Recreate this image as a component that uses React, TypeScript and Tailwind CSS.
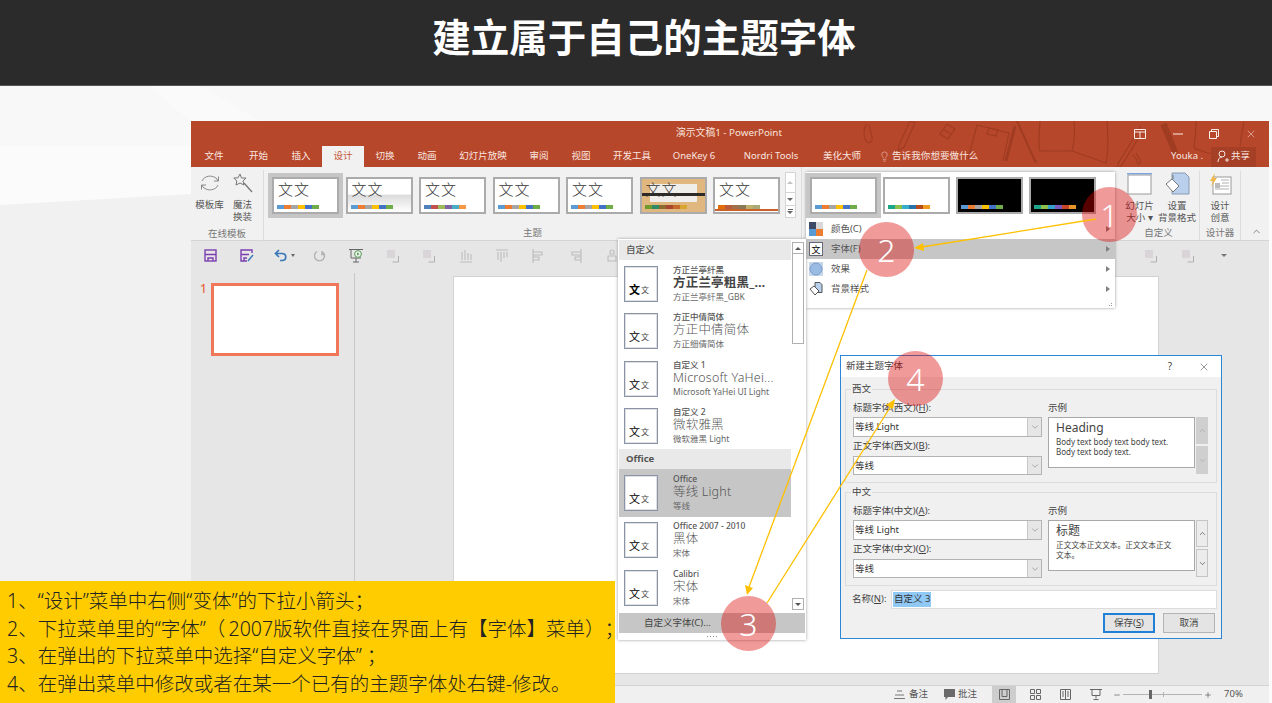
import { ChevronDown, ChevronUp, Lightbulb, Minus, Plus, X } from "lucide-react";

const OFFICE = ["#5b9bd5", "#ed7d31", "#a5a5a5", "#ffc000", "#4472c4", "#70ad47"];
const OFFICE_OLD = ["#4f81bd", "#c0504d", "#9bbb59", "#8064a2", "#4bacc6", "#f79646"];
const TEAL = ["#1ba58a", "#8cc04a", "#36aecb", "#2872a7", "#b84a1e", "#ef9b1d"];
const TEAL_DARK = ["#1ba58a", "#8cc04a", "#36a0cb", "#7a5bbd", "#c8452a", "#e6952a"];
const WOOD = ["#6f9a2e", "#2f8a6a", "#8a6a2e", "#a8452e", "#c46a2a", "#d8a52e"];
const WARM = ["#e36c09", "#b85b3a", "#a0704a", "#8a7a5a", "#c0b070", "#a8a878"];

const TABS = [
  { label: "文件", w: "w-[46px]" },
  { label: "开始", w: "w-[43px]" },
  { label: "插入", w: "w-[42px]" },
  { label: "设计", w: "w-[42px]", active: true },
  { label: "切换", w: "w-[42px]" },
  { label: "动画", w: "w-[42px]" },
  { label: "幻灯片放映", w: "w-[70px]" },
  { label: "审阅", w: "w-[42px]" },
  { label: "视图", w: "w-[42px]" },
  { label: "开发工具", w: "w-[60px]" },
  { label: "OneKey 6", w: "w-[64px]" },
  { label: "Nordri Tools", w: "w-[90px]" },
  { label: "美化大师", w: "w-[52px]" },
];

const FONTS = [
  { head: "方正兰亭纤黑", mid: "方正兰亭粗黑_…", sub: "方正兰亭纤黑_GBK", bold: true },
  { head: "方正中倩简体", mid: "方正中倩简体", sub: "方正细倩简体" },
  { head: "自定义 1", mid: "Microsoft YaHei...", sub: "Microsoft YaHei UI Light" },
  { head: "自定义 2", mid: "微软雅黑", sub: "微软雅黑 Light" },
];

const OFFICE_FONTS = [
  { head: "Office", mid: "等线 Light", sub: "等线", selected: true },
  { head: "Office 2007 - 2010", mid: "黑体", sub: "宋体" },
  { head: "Calibri", mid: "宋体", sub: "宋体" },
];

function Swatches({ colors }: { colors: string[] }) {
  return (
    <div className="flex">
      {colors.map((c, i) => (
        <div key={i} className="w-[7px] h-[4px]" style={{ backgroundColor: c }} />
      ))}
    </div>
  );
}

function ThemeThumb({ colors, bg = "bg-white", text = true, selected = false, dark = false, inner }: {
  colors: string[];
  bg?: string;
  text?: boolean;
  selected?: boolean;
  dark?: boolean;
  inner?: React.ReactNode;
}) {
  return (
    <div
      className={`relative w-[67px] h-[37px] shrink-0 border-2 border-[#ababab] flex flex-col justify-end pb-[3px] pl-[3px] ${bg} ${
        selected ? "outline-[4px] outline-[#c6c6c6] border-[#8c8c8c]" : ""
      } ${dark ? "border-[#9a9a9a]" : ""}`}
    >
      {inner}
      {text && (
        <div className="absolute left-[4px] top-[0px] text-[15px] leading-[20px] text-[#333] font-light tracking-[1px]">文文</div>
      )}
      <div className="relative">
        <Swatches colors={colors} />
      </div>
    </div>
  );
}

function RibbonBtn({ icon, lines, w = "w-[33px]" }: { icon: React.ReactNode; lines: React.ReactNode[]; w?: string }) {
  return (
    <div className={`${w} flex flex-col items-center text-[9.5px] leading-[12px] text-[#555]`}>
      <div className="h-[26px] flex items-center justify-center">{icon}</div>
      <div className="mt-[3px] whitespace-nowrap text-center">
        {lines.map((l, i) => (
          <div key={i}>{l}</div>
        ))}
      </div>
    </div>
  );
}

function GroupLabel({ children }: { children: React.ReactNode }) {
  return <div className="h-[15px] text-center text-[9.5px] leading-[15px] text-[#777]">{children}</div>;
}

function ToolIcon({ children }: { children: React.ReactNode }) {
  return <div className="w-[36.5px] shrink-0 flex items-center justify-center">{children}</div>;
}

function FaintStack() {
  return (
    <svg width="14" height="14" viewBox="0 0 14 14">
      <rect x="1" y="1" width="8" height="8" fill="#d8d4d8" />
      <path d="M12.500 7v6h-6" fill="none" stroke="#b0b0b0" />
    </svg>
  );
}

function FaintBars({ d }: { d: string }) {
  return (
    <svg width="14" height="14" viewBox="0 0 14 14">
      <path d={d} fill="none" stroke="#bcbcbc" strokeWidth="1.100" />
    </svg>
  );
}

function FontThumb({ bold }: { bold?: boolean }) {
  return (
    <div className="w-[34px] h-[36px] shrink-0 border border-[#8a94a8] bg-white shadow-[inset_0_0_0_1px_#e0e0e0] flex items-end pl-[4px] pb-[5px] text-black">
      <span className={`text-[11px] leading-[13px] ${bold ? "font-bold" : "font-normal"}`}>文</span>
      <span className="text-[8px] leading-[12px] ml-[1px] text-[#444]">文</span>
    </div>
  );
}

function FontItem({ head, mid, sub, bold, selected }: { head: string; mid: string; sub: string; bold?: boolean; selected?: boolean }) {
  return (
    <div className={`h-[47.5px] flex items-center pl-[5px] ${selected ? "bg-[#c6c6c6]" : ""}`}>
      <FontThumb bold={bold} />
      <div className="ml-[15px] min-w-0 whitespace-nowrap text-[#555]">
        <div className="text-[8.5px] leading-[10px] font-medium">{head}</div>
        <div className={`text-[12.5px] leading-[15px] ${bold ? "font-bold text-[#444]" : "font-light text-[#555]"} tracking-[0.2px]`}>{mid}</div>
        <div className="text-[8.5px] leading-[13px] text-[#666]">{sub}</div>
      </div>
    </div>
  );
}

function MenuRow({ icon, label, active }: { icon: React.ReactNode; label: string; active?: boolean }) {
  return (
    <div className={`h-[20px] flex items-center pl-[3px] pr-[5px] ${active ? "bg-[#c6c6c6]" : ""}`}>
      <div className="w-[14px] h-[14px] flex items-center justify-center">{icon}</div>
      <span className="ml-[8px] text-[9.5px] text-[#555]">{label}</span>
      <div className="ml-auto w-0 h-0 border-y-[3px] border-y-transparent border-l-[4px] border-l-[#808080]" />
    </div>
  );
}

function Combo({ value, h = "h-[20px]" }: { value: string; h?: string }) {
  return (
    <div className={`${h} w-[189px] flex items-center bg-white border border-[#b4b4b4]`}>
      <span className="flex-1 pl-[1px] text-[9.5px] text-[#333]">{value}</span>
      <div className="w-[14px] h-full bg-[#e6e6e6] border-l border-[#c8c8c8] flex items-center justify-center">
        <ChevronDown size={10} strokeWidth={1.2} className="text-[#666]" />
      </div>
    </div>
  );
}

function FontGroup({ title, h1, h2, v1, preview, disabled }: { title: string; h1: React.ReactNode; h2: React.ReactNode; v1: string; preview: React.ReactNode; disabled?: boolean }) {
  return (
    <fieldset className="border border-[#dcdcdc] px-[7px] pb-[7px] pt-[7px] min-w-0">
      <legend className="-ml-[2px] px-[1px] text-[9.5px] leading-[12px] text-[#444]">{title}</legend>
      <div className="flex">
        <div className="w-[189px] text-[9.5px] leading-[12px] text-[#444]">
          <div>{h1}</div>
          <div className="mt-[3px]">
            <Combo value={v1} />
          </div>
          <div className="mt-[3px]">{h2}</div>
          <div className="mt-[4px]">
            <Combo value="等线" h="h-[19px]" />
          </div>
        </div>
        <div className="ml-[6px] flex-1 text-[9.5px] leading-[12px] text-[#444]">
          <div>示例</div>
          <div className="mt-[3px] flex">
            <div className="w-[147px] h-[51px] bg-white border border-[#a8a8a8] pl-[7px] pt-[2px] overflow-hidden">
              {preview}
            </div>
            <div className="ml-[1px] w-[12px] h-[57px] flex flex-col gap-[2px]">
              <div className={`h-[27px] flex items-center justify-center ${disabled ? "bg-[#cfcfcf]" : "bg-[#ececec] border border-[#c4c4c4]"}`}>
                <ChevronUp size={9} strokeWidth={1.6} className={disabled ? "text-[#a0a0a0]" : "text-[#333]"} />
              </div>
              <div className={`h-[28px] flex items-center justify-center ${disabled ? "bg-[#cfcfcf]" : "bg-[#ececec] border border-[#c4c4c4]"}`}>
                <ChevronDown size={9} strokeWidth={1.6} className={disabled ? "text-[#a0a0a0]" : "text-[#333]"} />
              </div>
            </div>
          </div>
        </div>
      </div>
    </fieldset>
  );
}

function Badge({ n, pos }: { n: number; pos: string }) {
  return (
    <div className={`absolute ${pos} w-[55px] h-[55px] rounded-full bg-[#d90202]/40 flex items-center justify-center text-white text-[32px] font-light leading-none`}>
      {n}
    </div>
  );
}

function TitleArt() {
  return (
    <svg className="absolute right-0 top-0" width="480" height="46" viewBox="790 121 480 46" fill="none" stroke="#a03c22" strokeWidth="1.2">
      <path d="M868 124c-4 4-4 14 0 18 3 2 6-1 5-5l-3-12" />
      <path d="M900 145l11-24 5 2-11 24-6 4z" />
      <path d="M948 124l8 5-7 10-8-5z M944 129l8 5" />
      <path d="M978 125l-9 34M978 125l32 8-6 28" />
      <path d="M990 128l9 2-2 6-9-2z" />
      <path d="M1016 126l-9 35" strokeWidth="3" />
      <path d="M1018 121l18 40 2 1" strokeWidth="2" />
      <path d="M1041 121c-1 13-2 26 0 30l32 0M1073 151c3-10 3-20 2-30M1108 121c1 14 1 34-1 42l-34-12" />
      <path d="M1142 126l-22 36-3 8 6-5 22-36" />
      <path d="M1133 155c3 1 5 5 6 9 2 1 3-2 2-4l-4-7" />
      <path d="M1162 125l12 28 4 2 0-4-11-28" fill="#a03c22" />
      <path d="M1197 121c0 12-1 20-2 26 1 3 6 3 14 6l28 4" />
      <path d="M1245 122c-2 8-3 16-4 24" />
    </svg>
  );
}

export default function App() {
  return (
    <div className="relative w-[1272px] h-[703px] overflow-hidden bg-[#fbfbfb] [text-spacing-trim:space-all] font-['Noto_Sans','Noto_Sans_CJK_SC',sans-serif] flex flex-col">
      {/* faint backdrop shapes */}
      <svg className="absolute left-0 top-[86px]" width="1272" height="617" viewBox="0 0 1272 617">
        <rect width="1272" height="60" fill="#f8f8f8" />
        <polygon points="0,119 191,108 191,617 0,617" fill="#f1f1f1" />
        <polygon points="150,0 190,35 260,35 200,0" fill="#fafafa" />
      </svg>

      <header className="relative h-[86px] shrink-0 bg-[#2b2b2b] border-b border-[#555] flex items-center justify-center">
        <h1 className="text-[38.5px] leading-none font-bold text-white -mt-[11px] ml-[16px]">建立属于自己的主题字体</h1>
      </header>

      {/* PowerPoint window */}
      <div className="relative ml-[191px] mt-[35px] w-[1078px] flex-1 min-h-0 flex flex-col bg-[#e6e6e6]">
        <div className="relative bg-[#b7472a] h-[46px] shrink-0">
          <TitleArt />
          <div className="relative h-[25px] flex items-center pl-[485px] text-[9.8px] text-[#f7e4dd]">
            <span>演示文稿1 - PowerPoint</span>
            <div className="ml-auto flex items-center">
              <svg className="mr-[27px]" width="12" height="10" viewBox="0 0 12 10" fill="none" stroke="#fbeee9">
                <path d="M.500.500h11v9H.500zM.500 3h11M6 3v6.500" />
              </svg>
              <svg className="mr-[26px]" width="10" height="2" viewBox="0 0 10 2" stroke="#fbeee9">
                <path d="M0 1h10" />
              </svg>
              <svg className="mr-[26px]" width="10" height="10" viewBox="0 0 10 10" fill="none" stroke="#fbeee9">
                <path d="M.500 2.500h7v7h-7zM2.500 2.500v-2h7v7h-2" />
              </svg>
              <X size={12} strokeWidth={1} className="mr-[12px] text-[#fbeee9]" />
            </div>
          </div>
          <div className="relative h-[21px] flex text-[9.5px] text-[#f9e6e0]">
            {TABS.map((t) => (
              <div
                key={t.label}
                className={`${t.w} shrink-0 flex items-center justify-center ${t.active ? "bg-[#f1f1f1] text-[#c8583a]" : ""}`}
              >
                {t.label}
              </div>
            ))}
            <div className="ml-[11px] flex items-center">
              <Lightbulb size={11} strokeWidth={1.1} />
              <span className="ml-[2px] tracking-[0.1px]">告诉我你想要做什么</span>
            </div>
            <div className="ml-auto flex items-center">
              <span>Youka .</span>
              <div className="ml-[8px] mr-[13px] w-[45px] h-[20px] bg-[#a53f25] flex items-center justify-center">
                <svg width="12" height="13" viewBox="0 0 12 13" fill="none" stroke="currentColor">
                  <circle cx="5" cy="4" r="3" />
                  <path d="M1 12c0-3 1.500-5 4-5M8 10h4M10 8v4" />
                </svg>
                <span className="ml-[2px]">共享</span>
              </div>
            </div>
          </div>
        </div>

        {/* ribbon */}
        <div className="h-[74px] shrink-0 bg-[#f1f1f1] border-b border-[#d4d4d4] flex">
          <div className="w-[73px] flex flex-col border-r border-[#dcdcdc] my-[3px] -mb-[1px]">
            <div className="flex-1 pl-[2px] flex">
              <RibbonBtn
                lines={["模板库"]}
                icon={
                  <svg width="22" height="22" viewBox="0 0 22 22" fill="none" stroke="#8a8a8a" strokeWidth="1">
                    <path d="M3 9c2-5 10-7 15-2l1 2M19 13c-2 5-10 7-15 2l-1-2" />
                    <path d="M19.500 4.500v4.500h-4.500M2.500 17.500v-4.500h4.500" />
                  </svg>
                }
              />
              <RibbonBtn
                lines={["魔法", "换装"]}
                icon={
                  <svg width="22" height="22" viewBox="0 0 22 22" fill="none" stroke="#777" strokeWidth="1">
                    <path d="M8 2l1.500 4 4.500 0-3 3 1 4-4-2-4 2 .8-4-3-3 4.200-.2z" />
                    <path d="M12 11l8 9" strokeWidth="1.300" />
                  </svg>
                }
              />
            </div>
            <GroupLabel>在线模板</GroupLabel>
          </div>

          <div className="w-[537px] flex flex-col">
            <div className="flex-1 pl-[8px] pt-[10px] flex gap-[6.5px] relative">
              <ThemeThumb colors={OFFICE} selected />
              <ThemeThumb colors={OFFICE} bg="bg-[linear-gradient(#fff_45%,#dcdcdc_50%,#fff_100%)]" />
              <ThemeThumb colors={OFFICE_OLD} />
              <ThemeThumb colors={OFFICE} />
              <ThemeThumb colors={OFFICE} />
              <ThemeThumb
                colors={WOOD}
                bg="bg-[#dfb77f]"
                inner={
                  <>
                    <div className="absolute left-[8px] right-[8px] top-[5px] h-[18px] bg-[#f0eeea]" />
                    <div className="absolute left-0 right-0 top-[14px] h-[3px] bg-[#2e2a26]" />
                  </>
                }
              />
              <ThemeThumb
                colors={WARM}
                inner={<div className="absolute left-0 right-0 bottom-[1px] h-[2px] bg-[#c8622a]" />}
              />
              <div className="ml-[-2px] mt-[-5px] w-[11px] h-[46px] flex flex-col border border-[#d4d4d4] bg-white text-[#666]">
                <div className="h-[20px] flex items-center justify-center border-b border-[#d4d4d4]">
                  <div className="w-0 h-0 border-x-[3px] border-x-transparent border-b-[3px] border-b-[#c4c4c4]" />
                </div>
                <div className="h-[13px] flex items-center justify-center border-b border-[#d4d4d4]">
                  <div className="w-0 h-0 border-x-[3px] border-x-transparent border-t-[3px] border-t-[#666]" />
                </div>
                <div className="flex-1 flex flex-col items-center justify-center gap-[1px]">
                  <div className="w-[5px] h-px bg-[#666]" />
                  <div className="w-0 h-0 border-x-[3px] border-x-transparent border-t-[3px] border-t-[#666]" />
                </div>
              </div>
            </div>
            <GroupLabel>主题</GroupLabel>
          </div>

          <div className="w-[317px] border-l border-[#dcdcdc]" />

          <div className="w-[82px] flex flex-col border-r border-[#dcdcdc] mt-[4px]">
            <div className="flex-1 flex pl-[3px]">
              <RibbonBtn
                w="w-[37px]"
                lines={["幻灯片", "大小 ▾"]}
                icon={
                  <svg width="26" height="22" viewBox="0 0 26 22" fill="none">
                    <rect x="1" y="2" width="23" height="19" fill="#fff" stroke="#9a9a9a" />
                    <path d="M0 .700h25" stroke="#7ea6d8" strokeWidth="1.400" />
                  </svg>
                }
              />
              <RibbonBtn
                w="w-[38px]"
                lines={["设置", "背景格式"]}
                icon={
                  <svg width="26" height="24" viewBox="0 0 26 24" fill="none">
                    <path d="M8 1h13l4 4v17H8z" fill="#b8d0ec" stroke="#8a9ab0" />
                    <path d="M2 12l6-5 7 7-6 6z" fill="#fff" stroke="#777" />
                    <path d="M9 7V3" stroke="#777" />
                  </svg>
                }
              />
            </div>
            <GroupLabel>自定义</GroupLabel>
          </div>

          <div className="w-[41px] flex flex-col border-r border-[#dcdcdc] mt-[4px]">
            <div className="flex-1 flex justify-center">
              <RibbonBtn
                w="w-[40px]"
                lines={["设计", "创意"]}
                icon={
                  <svg width="24" height="24" viewBox="0 0 24 24" fill="none">
                    <rect x="5" y="5" width="18" height="17" fill="#fff" stroke="#9a9a9a" />
                    <path d="M13 8h8M14 11h7M7 14h14M7 17h14" stroke="#b0b0b0" />
                    <rect x="7" y="11" width="5" height="5" fill="#bbb" />
                    <path d="M7 1L2 9h3l-2 6 6-9H6z" fill="#f0b94a" />
                  </svg>
                }
              />
            </div>
            <GroupLabel>设计器</GroupLabel>
          </div>

          <div className="flex-1 flex items-end justify-end pr-[7px] pb-[3px]">
            <ChevronUp size={11} strokeWidth={1.5} className="text-[#555]" />
          </div>
        </div>

        {/* quick toolbar */}
        <div className="h-[32px] shrink-0 flex items-center pl-[1px] pb-[3px]">
          <ToolIcon>
            <svg width="13" height="13" viewBox="0 0 13 13" fill="none" stroke="#7b3fb0" strokeWidth="1.400">
              <rect x="1" y="1" width="11" height="11" />
              <path d="M1 5.500h11M4 12V9h5v3" />
            </svg>
          </ToolIcon>
          <ToolIcon>
            <svg width="14" height="13" viewBox="0 0 14 13" fill="none" stroke="#7b3fb0" strokeWidth="1.400">
              <path d="M12 4V1H1v11h6M1 5.500h8M4 12V9h3" />
              <path d="M8 12l5-6" stroke="#3a7ab5" />
            </svg>
          </ToolIcon>
          <ToolIcon>
            <div className="flex items-center gap-[3px] ml-[2px]">
              <svg width="14" height="13" viewBox="0 0 14 13" fill="none" stroke="#3a78b8" strokeWidth="1.700">
                <path d="M5 1L1.500 4.500 5 8M2 4.500h6c5 0 5 7 0 7H6" />
              </svg>
              <div className="w-0 h-0 border-x-[2.5px] border-x-transparent border-t-[3px] border-t-[#666]" />
            </div>
          </ToolIcon>
          <ToolIcon>
            <svg width="12" height="12" viewBox="0 0 12 12" fill="none" stroke="#b0b0b0" strokeWidth="1.400">
              <path d="M8 1.500a5 5 0 1 1-5 0M8 1v3.500h3" />
            </svg>
          </ToolIcon>
          <ToolIcon>
            <svg width="16" height="15" viewBox="0 0 16 15" fill="none" stroke="#666">
              <path d="M1 1.500h14M3 1.500v8.500h10" />
              <path d="M5 14h6M8 10v4" />
              <circle cx="10" cy="6" r="3.400" fill="#e8f3e8" stroke="#5a9a5a" />
              <path d="M9.200 4.500l2.200 1.500-2.200 1.500z" fill="#4a8a4a" stroke="none" />
            </svg>
          </ToolIcon>
          <ToolIcon><FaintStack /></ToolIcon>
          <ToolIcon><FaintStack /></ToolIcon>
          <ToolIcon><FaintBars d="M1 13h12M3 3v8M6 1v10M9 4v7M12 5v6" /></ToolIcon>
          <ToolIcon><FaintBars d="M1 1h12M3 3v8M6 3v10M9 3v6M12 3v5" /></ToolIcon>
          <ToolIcon><FaintBars d="M1 0v14M1 3h9v3H1M1 8h6v3H1" /></ToolIcon>
          <ToolIcon><FaintBars d="M13 0v14M13 3H4v3h9M13 8H7v3h6" /></ToolIcon>
          <ToolIcon><FaintBars d="M7 1a2 2 0 0 1 2 2v2H5V3a2 2 0 0 1 2-2zM3 7h8v5H3z" /></ToolIcon>
          <div className="ml-auto flex items-center">
            <ToolIcon><FaintStack /></ToolIcon>
            <ToolIcon><FaintStack /></ToolIcon>
            <div className="w-[36px] flex justify-center">
              <div className="w-0 h-0 border-x-[3px] border-x-transparent border-t-[3px] border-t-[#777]" />
            </div>
            <div className="w-[27px]" />
          </div>
        </div>

        {/* slide panes */}
        <div className="flex-1 min-h-0 flex">
          <div className="w-[164px] shrink-0 border-r border-[#c8c8c8] flex pl-[9px] pt-[10px]">
            <span className="w-[11px] text-[12px] leading-[12px] font-medium text-[#e8683f]">1</span>
            <div className="w-[128px] h-[73px] bg-white border-[3px] border-[#f0775a]" />
          </div>
          <div className="flex-1 min-w-0 pl-[98px] pt-[3px]">
            <div className="w-[706px] h-[398px] bg-white border border-[#d2d2d2]" />
          </div>
        </div>

        {/* status bar */}
        <div className="h-[18px] shrink-0 border-t border-[#d4d4d4] bg-[#f0f0f0] flex items-center text-[9.5px] text-[#555]">
          <svg className="ml-[703px]" width="11" height="10" viewBox="0 0 11 10" fill="none" stroke="#777">
            <path d="M3 1h5M1 5h9M0 8.500h11" />
          </svg>
          <span className="ml-[4px]">备注</span>
          <svg className="ml-[16px]" width="11" height="11" viewBox="0 0 11 11" fill="#6a6a6a">
            <path d="M0 0h11v8H4L1.500 11V8H0z" />
          </svg>
          <span className="ml-[3px]">批注</span>
          <div className="ml-[15px] w-[24px] h-[18px] bg-[#cdcdcd] flex items-center justify-center">
            <svg width="11" height="11" viewBox="0 0 11 11" fill="none" stroke="#666">
              <path d="M.500.500h10v10H.500zM3 .500v7h5v-7" />
            </svg>
          </div>
          <svg className="ml-[14px]" width="11" height="11" viewBox="0 0 11 11" fill="none" stroke="#666">
            <path d="M.500.500h4v4h-4zM6.500.500h4v4h-4zM.500 6.500h4v4h-4zM6.500 6.500h4v4h-4z" />
          </svg>
          <svg className="ml-[19px]" width="11" height="11" viewBox="0 0 11 11" fill="none" stroke="#666">
            <path d="M.500.500h10v10H.500zM5.500.500v10M2 3h2M2 5h2M2 7h2M7 3h2M7 5h2M7 7h2" />
          </svg>
          <svg className="ml-[19px]" width="12" height="11" viewBox="0 0 12 11" fill="none" stroke="#666">
            <path d="M0 .500h12M2 .500v6h8v-6M6 6.500v3M3.500 10.500h5" />
          </svg>
          <Minus size={8} strokeWidth={2} className="ml-[11px] text-[#555]" />
          <div className="relative ml-[2px] w-[79px] h-[1px] bg-[#b4b4b4]">
            <div className="absolute left-[26px] -top-[4px] w-[3px] h-[9px] bg-[#666]" />
            <div className="absolute left-[40px] -top-[2px] w-px h-[5px] bg-[#b4b4b4]" />
          </div>
          <Plus size={8} strokeWidth={2} className="ml-[2px] text-[#555]" />
          <span className="ml-[12px]">70%</span>
        </div>
      </div>

      {/* variants dropdown */}
      <div className="absolute left-[806px] top-[172px] w-[309px] h-[136px] bg-white shadow-[0_0_3px_#999] flex flex-col">
        <div className="h-[47px] shrink-0 pl-[4px] pt-[5px] flex gap-[6px]">
          <ThemeThumb colors={OFFICE} text={false} selected />
          <ThemeThumb colors={TEAL} text={false} />
          <ThemeThumb colors={OFFICE} text={false} bg="bg-black" dark />
          <ThemeThumb colors={TEAL_DARK} text={false} bg="bg-black" dark />
        </div>
        <MenuRow
          label="颜色(C)"
          icon={
            <svg width="14" height="14" viewBox="0 0 14 14">
              <rect width="7" height="7" fill="#3c4a66" />
              <rect x="7" width="7" height="7" fill="#d8d8d8" />
              <rect y="7" width="7" height="7" fill="#5b9bd5" />
              <rect x="7" y="7" width="7" height="7" fill="#ed7d31" />
            </svg>
          }
        />
        <MenuRow
          active
          label="字体(F)"
          icon={
            <div className="w-[14px] h-[14px] bg-white border border-[#667] flex items-center justify-center text-[9px] leading-none text-black">文</div>
          }
        />
        <MenuRow
          label="效果"
          icon={
            <svg width="14" height="14" viewBox="0 0 14 14">
              <rect width="14" height="14" fill="#c8d8ec" />
              <circle cx="7" cy="7" r="6" fill="#9abbe4" stroke="#7a9cc8" />
            </svg>
          }
        />
        <MenuRow
          label="背景样式"
          icon={
            <svg width="14" height="14" viewBox="0 0 14 14" fill="none" stroke="#555">
              <path d="M6 .500h5l2 2v8H6z" fill="#b8d0ec" />
              <path d="M1 7l4-3 5 5-4 4z" fill="#fff" />
            </svg>
          }
        />
        <div className="flex-1 flex items-end justify-end pr-[3px] pb-[2px]">
          <div className="grid grid-cols-2 gap-[1px]">
            <div className="w-px h-px" />
            <div className="w-px h-px bg-[#999]" />
            <div className="w-px h-px bg-[#999]" />
            <div className="w-px h-px bg-[#999]" />
          </div>
        </div>
      </div>

      {/* font list dropdown */}
      <div className="absolute left-[618px] top-[239px] w-[188px] h-[401px] bg-white shadow-[0_0_3px_#999] flex flex-col pt-[1px] pl-[1px] pr-[1px]">
        <div className="flex-1 min-h-0 flex">
          <div className="w-[172px] shrink-0">
            <div className="h-[20px] bg-[#e9e9e9] pl-[7px] flex items-center text-[9.5px] font-medium text-[#555]">自定义</div>
            {FONTS.map((f) => (
              <FontItem key={f.head} {...f} />
            ))}
            <div className="mt-[-1px] h-[20px] bg-[#e9e9e9] pl-[7px] flex items-center text-[9.5px] font-bold text-[#555]">Office</div>
            {OFFICE_FONTS.map((f) => (
              <FontItem key={f.head} {...f} />
            ))}
          </div>
          <div className="ml-[1px] w-[12px] pt-[2px] flex flex-col">
            <div className="h-[12px] border border-[#b0b0b0] flex items-center justify-center">
              <div className="w-0 h-0 border-x-[3px] border-x-transparent border-b-[3px] border-b-[#555]" />
            </div>
            <div className="h-[90px] border border-t-0 border-[#b0b0b0]" />
            <div className="mt-auto mb-[3px] h-[12px] border border-[#b0b0b0] flex items-center justify-center">
              <div className="w-0 h-0 border-x-[3px] border-x-transparent border-t-[3px] border-t-[#555]" />
            </div>
          </div>
        </div>
        <div className="h-[20px] shrink-0 bg-[#c6c6c6] pl-[25px] flex items-center text-[9.5px] text-[#444]">自定义字体(C)...</div>
        <div className="h-[7px] shrink-0 flex items-center justify-center gap-[2px]">
          <div className="w-px h-px bg-[#888]" />
          <div className="w-px h-px bg-[#888]" />
          <div className="w-px h-px bg-[#888]" />
          <div className="w-px h-px bg-[#888]" />
        </div>
      </div>

      {/* new theme fonts dialog */}
      <div className="absolute left-[840px] top-[355px] w-[382px] h-[284px] bg-[#f0f0f0] border border-[#2b86d8] flex flex-col">
        <div className="h-[21px] shrink-0 bg-white flex items-center pl-[5px] text-[9.5px] text-[#444]">
          <span>新建主题字体</span>
          <span className="ml-auto text-[10px]">?</span>
          <X size={12} strokeWidth={1.1} className="ml-[26px] mr-[11px]" />
        </div>
        <div className="flex-1 px-[4px] pt-[6px] flex flex-col">
          <FontGroup
            title="西文"
            h1={<>标题字体(西文)(<u>H</u>):</>}
            h2={<>正文字体(西文)(<u>B</u>):</>}
            v1="等线 Light"
            disabled
            preview={
              <>
                <div className="text-[12px] leading-[16px] text-[#444]">Heading</div>
                <div className="mt-[1px] text-[8px] leading-[10px] text-[#444]">
                  Body text body text body text.
                  <br />
                  Body text body text.
                </div>
              </>
            }
          />
          <div className="mt-[3px]">
            <FontGroup
              title="中文"
              h1={<>标题字体(中文)(<u>A</u>):</>}
              h2={<>正文字体(中文)(<u>O</u>):</>}
              v1="等线 Light"
              preview={
                <>
                  <div className="text-[12px] leading-[16px] text-[#444]">标题</div>
                  <div className="mt-[1px] text-[7.7px] leading-[10px] text-[#444] whitespace-nowrap">
                    正文文本正文文本。正文文本正文
                    <br />
                    文本。
                  </div>
                </>
              }
            />
          </div>
          <div className="mt-[4px] h-[19px] flex items-center pl-[7px] text-[9.5px] text-[#444]">
            <span className="w-[39px]">名称(<u>N</u>):</span>
            <div className="flex-1 h-full bg-white border border-[#dcdcdc] flex items-center pl-[1px]">
              <span className="bg-[#90c8f6] text-[#333] px-[1px]">自定义 3</span>
            </div>
          </div>
          <div className="mt-[4px] flex justify-end gap-[8px] pr-[2px] text-[9.5px] text-[#444]">
            <div className="w-[52px] h-[20px] flex items-center justify-center bg-[#e4e4e4] border-2 border-[#1f80d6]">保存(<u>S</u>)</div>
            <div className="w-[52px] h-[20px] flex items-center justify-center bg-[#e4e4e4] border border-[#b4b4b4]">取消</div>
          </div>
        </div>
      </div>

      {/* yellow notes */}
      <div className="absolute left-0 top-[581px] w-[615px] h-[122px] bg-[#ffcc00] pl-[7px] pt-[6px] text-[19.5px] leading-[27.5px] font-light text-[#222] whitespace-nowrap">
        <p>1、“设计”菜单中右侧“变体”的下拉小箭头；</p>
        <p>2、下拉菜单里的“字体”（{"\u2009"}2007版软件直接在界面上有【字体】菜单）；</p>
        <p>3、在弹出的下拉菜单中选择“自定义字体” ；</p>
        <p>4、在弹出菜单中修改或者在某一个已有的主题字体处右键-修改。</p>
      </div>

      <Badge n={1} pos="left-[1082px] top-[187px]" />
      <Badge n={2} pos="left-[859px] top-[222px]" />
      <Badge n={3} pos="left-[721px] top-[596px]" />
      <Badge n={4} pos="left-[888px] top-[351px]" />

      {/* callout arrows */}
      <svg className="absolute left-0 top-0 pointer-events-none" width="1272" height="703" viewBox="0 0 1272 703" fill="none" stroke="#ffc000" strokeWidth="1.300">
        <path d="M1096 219L922 247" />
        <polygon points="914,248 923,243 924,251" fill="#ffc000" stroke="none" />
        <path d="M867 270L749 587" />
        <polygon points="747,595 745,585 753,588" fill="#ffc000" stroke="none" />
        <path d="M767 603L891 406" />
        <polygon points="895,399 893,409 886,405" fill="#ffc000" stroke="none" />
      </svg>
    </div>
  );
}
